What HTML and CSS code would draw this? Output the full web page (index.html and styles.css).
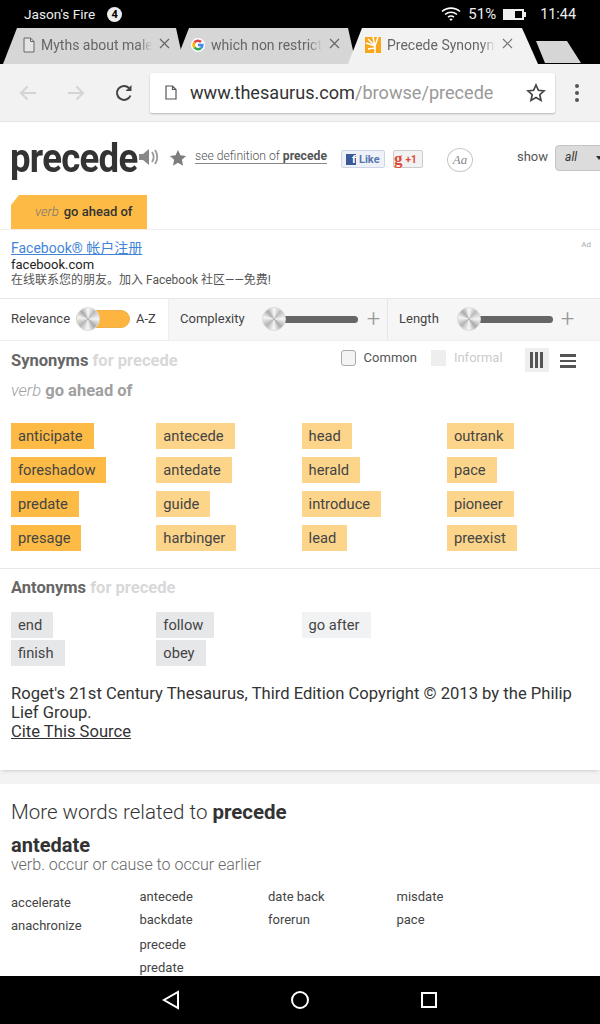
FILE: index.html
```html
<!DOCTYPE html>
<html lang="en">
<head>
  <meta charset="UTF-8" />
  <title>Precede Synonyms</title>
  <link rel="stylesheet" href="styles.css">
</head>
<body>
<div class="device">

  <div class="status-bar">
    <span class="owner">Jason's Fire</span>
    <span class="notif">4</span>
    <svg class="wifi" width="20" height="16" viewBox="0 0 20 16" fill="none" stroke="#fff" stroke-width="1.6"><path d="M1 5.500C6 1 14 1 19 5.500"/><path d="M4 8.500c3.500-3 8.500-3 12 0"/><path d="M7 11.200c1.800-1.400 4.200-1.400 6 0"/><path d="M10 15l-1.800-2c1-.7 2.600-.7 3.600 0z" fill="#fff" stroke="none"/></svg>
    <span class="batt-pct">51%</span>
    <span class="battery"><span class="battery-fill"></span></span>
    <span class="clock">11:44</span>
  </div>

  <div class="tab-strip">
    <div class="tab tab-first">
      <svg class="fav" width="12" height="16" viewBox="0 0 12 16" fill="#e4e4e4" stroke="#666" stroke-width="1"><path d="M1 1h6.500L11 4.500V15H1z"/><path d="M7.500 1v3.500H11" fill="none"/></svg>
      <span class="tab-title">Myths about male</span>
      <svg class="tab-x" width="11" height="11" viewBox="0 0 11 11" stroke="#666" stroke-width="1.200"><path d="M1 1l9 9M10 1l-9 9"/></svg>
    </div>
    <div class="tab tab-mid">
      <svg class="fav" width="14" height="14" viewBox="0 0 14 14" fill="none" stroke-width="2.600"><circle cx="7" cy="7" r="7" fill="#fff" stroke="none"/><path d="M3.500 4.500A4.300 4.300 0 0 1 10 4" stroke="#e8453c"/><path d="M3.500 4.500a4.300 4.300 0 0 0 0 5" stroke="#f4b400"/><path d="M3.500 9.500A4.300 4.300 0 0 0 10 10" stroke="#34a853"/><path d="M7 7h4.300A4.300 4.300 0 0 1 10 10" stroke="#4285f4"/></svg>
      <span class="tab-title">which non restrict</span>
      <svg class="tab-x" width="11" height="11" viewBox="0 0 11 11" stroke="#666" stroke-width="1.200"><path d="M1 1l9 9M10 1l-9 9"/></svg>
    </div>
    <div class="tab tab-active">
      <svg class="fav" width="16" height="16" viewBox="0 0 16 16"><rect width="16" height="16" fill="#f9a61a"/><path d="M10 16V9M10 9L1 6M10 9L3 2M10 9L8 0M10 9l3-9M10 11l-7 1" stroke="#fff" stroke-width="1.500"/></svg>
      <span class="tab-title">Precede Synonym</span>
      <svg class="tab-x" width="11" height="11" viewBox="0 0 11 11" stroke="#777" stroke-width="1.200"><path d="M1 1l9 9M10 1l-9 9"/></svg>
    </div>
    <div class="new-tab"></div>
  </div>

  <div class="toolbar">
    <svg class="tool-arrow" width="20" height="20" viewBox="0 0 20 20" fill="none" stroke="#d4d4d4" stroke-width="2"><path d="M18 10H3M9.500 3.500L3 10l6.500 6.500"/></svg>
    <svg class="tool-arrow" width="20" height="20" viewBox="0 0 20 20" fill="none" stroke="#d4d4d4" stroke-width="2"><path d="M2 10h15M10.500 3.500L17 10l-6.500 6.500"/></svg>
    <svg class="tool-reload" width="20" height="20" viewBox="0 0 20 20" fill="none" stroke="#444" stroke-width="2"><path d="M16.500 12.500A7 7 0 1 1 15 5"/><path d="M17.500 2v6h-6z" fill="#444" stroke="none"/></svg>
    <div class="omnibox">
      <svg class="omni-page" width="12" height="15" viewBox="0 0 12 15" fill="none" stroke="#555" stroke-width="1.200"><path d="M1 1h6.500L11 4.500V14H1z"/><path d="M7.500 1v3.500H11"/></svg>
      <span class="omni-url"><span class="omni-host">www.thesaurus.com</span>/browse/precede</span>
      <svg class="omni-star" width="20" height="20" viewBox="0 0 20 20" fill="none" stroke="#444" stroke-width="1.700"><path d="M10 2l2.400 5.300 5.600.6-4.200 3.800 1.200 5.700-5-2.900-5 2.900 1.200-5.700L2 7.900l5.600-.6z"/></svg>
    </div>
    <div class="kebab"><i></i><i></i><i></i></div>
  </div>

  <div class="page">
    <div class="panel">
      <div class="word-head">
        <h1 class="word">precede</h1>
        <svg class="speaker" width="21" height="20" viewBox="0 0 21 20" fill="#888"><path d="M0 7h4l6-5v16l-6-5H0z"/><path d="M13 5c2 3 2 7 0 10M16 3c3 4 3 10 0 14" fill="none" stroke="#999" stroke-width="1.800"/></svg>
        <svg class="head-star" width="18" height="18" viewBox="0 0 20 20" fill="#7d7d7d"><path d="M10 1l2.700 6 6.300.7-4.700 4.300 1.300 6.500-5.600-3.300-5.600 3.300L5.700 12 1 7.700 7.300 7z"/></svg>
        <a class="see-def">see definition of <b>precede</b></a>
        <span class="fb-like"><span class="fb-f">f</span>Like</span>
        <span class="g-plus"><span class="g-g">g</span>+1</span>
        <span class="aa">Aa</span>
        <span class="show-label">show</span>
        <span class="show-select">all<span class="show-arrow"></span></span>
      </div>

      <div class="def-tabs">
        <div class="def-tab"><em>verb</em><b>go ahead of</b></div>
      </div>

      <div class="ad">
        <span class="ad-mark">Ad</span>
        <a class="ad-title">Facebook® 帐户注册</a>
        <div class="ad-domain">facebook.com</div>
        <div class="ad-text">在线联系您的朋友。加入 Facebook 社区——免费!</div>
      </div>

      <div class="filters">
        <div class="filter filter-rel">
          <span>Relevance</span>
          <span class="toggle"><span class="knob"></span></span>
          <span>A-Z</span>
        </div>
        <div class="filter filter-cx">
          <span class="filter-name">Complexity</span>
          <span class="slider"><span class="knob"></span></span>
          <span class="plus">+</span>
        </div>
        <div class="filter filter-len">
          <span class="filter-name">Length</span>
          <span class="slider"><span class="knob"></span></span>
          <span class="plus">+</span>
        </div>
      </div>

      <div class="syn-head">
        <h2 class="sec-title">Synonyms <span>for precede</span></h2>
        <label class="check"><span class="box"></span>Common</label>
        <label class="check check-off"><span class="box"></span>Informal</label>
        <span class="view view-on"><i></i><i></i><i></i></span>
        <span class="view-list"><i></i><i></i><i></i></span>
      </div>
      <div class="sense"><em>verb</em> go ahead of</div>

      <ul class="tag-grid">
        <li><span class="tag hot">anticipate</span></li>
        <li><span class="tag warm">antecede</span></li>
        <li><span class="tag warm">head</span></li>
        <li><span class="tag warm">outrank</span></li>
        <li><span class="tag hot">foreshadow</span></li>
        <li><span class="tag warm">antedate</span></li>
        <li><span class="tag warm">herald</span></li>
        <li><span class="tag warm">pace</span></li>
        <li><span class="tag hot">predate</span></li>
        <li><span class="tag warm">guide</span></li>
        <li><span class="tag warm">introduce</span></li>
        <li><span class="tag warm">pioneer</span></li>
        <li><span class="tag hot">presage</span></li>
        <li><span class="tag warm">harbinger</span></li>
        <li><span class="tag warm">lead</span></li>
        <li><span class="tag warm">preexist</span></li>
      </ul>

      <div class="ant-block">
        <h2 class="sec-title">Antonyms <span>for precede</span></h2>
        <ul class="tag-grid tag-grid-ant">
          <li><span class="tag cold">end</span></li>
          <li><span class="tag cold">follow</span></li>
          <li><span class="tag pale">go after</span></li>
          <li></li>
          <li><span class="tag cold">finish</span></li>
          <li><span class="tag cold">obey</span></li>
        </ul>
      </div>

      <p class="copyright">Roget's 21st Century Thesaurus, Third Edition Copyright © 2013 by the Philip Lief Group.<br><a>Cite This Source</a></p>
    </div>

    <div class="related">
      <h3 class="rel-title">More words related to <b>precede</b></h3>
      <div class="rel-word">antedate</div>
      <div class="rel-def">verb. occur or cause to occur earlier</div>
      <div class="rel-cols">
        <ul class="rel-col rel-col-low"><li>accelerate</li><li>anachronize</li></ul>
        <ul class="rel-col"><li>antecede</li><li>backdate</li><li class="rel-gap">precede</li><li>predate</li></ul>
        <ul class="rel-col"><li>date back</li><li>forerun</li></ul>
        <ul class="rel-col"><li>misdate</li><li>pace</li></ul>
      </div>
    </div>
  </div>

  <div class="nav-bar">
    <svg width="18" height="20" viewBox="0 0 18 20" fill="none" stroke="#fff" stroke-width="2"><path d="M16 2v16L2 10z"/></svg>
    <svg width="20" height="20" viewBox="0 0 20 20" fill="none" stroke="#fff" stroke-width="2"><circle cx="10" cy="10" r="8"/></svg>
    <svg width="18" height="18" viewBox="0 0 18 18" fill="none" stroke="#fff" stroke-width="2"><rect x="2" y="2" width="14" height="14"/></svg>
  </div>

</div>
</body>
</html>
```

FILE: styles.css
```css
* {
  box-sizing: border-box;
  margin: 0;
  padding: 0;
}

body {
  font-family: Roboto, "Noto Sans CJK SC", sans-serif;
  color: #333;
  background: #fff;
}

ul {
  list-style: none;
}

.device {
  width: 600px;
  height: 1024px;
  display: flex;
  flex-direction: column;
  overflow: hidden;
}

/* Status bar */
.status-bar {
  height: 28px;
  flex-shrink: 0;
  background: #000;
  color: #eee;
  display: flex;
  align-items: center;
  padding: 0 24px;
  font-size: 13.600px;
}

.notif {
  width: 15px;
  height: 15px;
  border-radius: 50%;
  background: #eee;
  color: #000;
  font-size: 11px;
  font-weight: 700;
  text-align: center;
  line-height: 15px;
  margin-left: 12px;
}

.wifi {
  margin-left: auto;
  margin-right: 7px;
}

.batt-pct {
  font-size: 15px;
  margin-right: 7px;
}

.battery {
  width: 21px;
  height: 11px;
  border: 2px solid #eee;
  margin-right: 16px;
  display: block;
  position: relative;
}

.battery::after {
  content: "";
  position: absolute;
  right: -4px;
  top: 1px;
  width: 2px;
  height: 5px;
  background: #eee;
}

.battery-fill {
  display: block;
  width: 10px;
  height: 7px;
  background: #eee;
}

.clock {
  font-size: 14.400px;
}

/* Tabs */
.tab-strip {
  height: 36px;
  flex-shrink: 0;
  background: #000;
  display: flex;
  align-items: flex-end;
  padding-left: 3px;
}

.tab {
  height: 36px;
  display: flex;
  align-items: center;
  font-size: 14px;
  color: #666;
  background: #d6d6d6;
  white-space: nowrap;
  clip-path: polygon(0 100%, 14px 0, calc(100% - 8px) 0, 100% 100%);
}

.tab-first {
  width: 181px;
  padding: 0 0 3px 20px;
}

.tab-mid {
  width: 181px;
  margin-left: -9px;
  padding: 0 0 3px 16px;
}

.tab-active {
  width: 190px;
  margin-left: -8px;
  padding: 0 0 3px 17px;
  background: #f2f2f2;
  clip-path: polygon(0 100%, 14px 0, calc(100% - 16px) 0, 100% 100%);
}

.fav {
  flex-shrink: 0;
  margin-right: 6px;
}

.tab-title {
  width: 111px;
  overflow: hidden;
  -webkit-mask-image: linear-gradient(to right, #000 88%, transparent);
  mask-image: linear-gradient(to right, #000 88%, transparent);
}

.tab-active .tab-title {
  width: 108px;
}

.tab-x {
  flex-shrink: 0;
  margin-left: 7px;
  margin-top: -3px;
}

.new-tab {
  width: 45px;
  height: 22px;
  margin: 0 0 1px -2px;
  background: #d6d6d6;
  clip-path: polygon(0 0, 31px 0, 100% 100%, 9px 100%);
}

/* Toolbar */
.toolbar {
  height: 58px;
  flex-shrink: 0;
  background: #f2f2f2;
  display: flex;
  align-items: center;
  padding-left: 18px;
  border-bottom: 1px solid #e4e4e4;
}

.tool-arrow {
  margin-right: 28px;
}

.tool-reload {
  margin-right: 16px;
}

.omnibox {
  width: 405px;
  height: 40px;
  background: #fff;
  border-radius: 2px;
  box-shadow: 0 1px 2px rgba(0,0,0,0.25);
  display: flex;
  align-items: center;
  padding: 0 9px 0 15px;
}

.omni-url {
  margin-left: 13px;
  font-size: 18.100px;
  color: #999;
  flex: 1;
  white-space: nowrap;
}

.omni-host {
  color: #333;
}

.kebab {
  margin-left: 20px;
  display: flex;
  flex-direction: column;
  gap: 3px;
}

.kebab i {
  width: 4px;
  height: 4px;
  border-radius: 50%;
  background: #555;
}

/* Page */
.page {
  flex: 1;
  min-height: 0;
  overflow: hidden;
  background: #f3f3f3;
}

.panel {
  background: #fff;
  height: 648px;
  box-shadow: 0 2px 4px -2px rgba(0,0,0,0.25);
}

.word-head {
  height: 73px;
  display: flex;
  align-items: flex-start;
  padding-left: 10px;
  overflow: hidden;
}

.word {
  font-size: 40px;
  font-weight: 700;
  line-height: 47px;
  margin-top: 13px;
  letter-spacing: -0.8px;
  color: #333;
  width: 129px;
  flex-shrink: 0;
  transform: scaleX(0.915);
  transform-origin: left;
}

.speaker {
  margin: 25px 0 0 0;
  flex-shrink: 0;
}

.head-star {
  margin: 27px 0 0 9px;
  flex-shrink: 0;
}

.see-def {
  font-size: 12.200px;
  font-weight: 300;
  color: #555;
  margin: 28px 0 0 8px;
  border-bottom: 1px solid #888;
  line-height: 13px;
  white-space: nowrap;
}

.see-def b {
  font-weight: 700;
}

.fb-like {
  margin: 28px 0 0 14px;
  width: 44px;
  height: 18px;
  border: 1px solid #cdd5e6;
  border-radius: 2px;
  background: #eef1f8;
  color: #5a76b0;
  font-size: 11px;
  font-weight: 700;
  display: flex;
  align-items: center;
  padding-left: 4px;
  flex-shrink: 0;
}

.fb-f {
  width: 10px;
  height: 11px;
  background: #3b5998;
  color: #fff;
  font-size: 11px;
  line-height: 12px;
  text-align: right;
  margin-right: 3px;
}

.g-plus {
  margin: 28px 0 0 8px;
  width: 30px;
  height: 18px;
  border: 1px solid #ccc;
  border-radius: 2px;
  background: #f2f2f2;
  color: #dd4b39;
  font-size: 10px;
  font-weight: 700;
  display: flex;
  align-items: center;
  flex-shrink: 0;
}

.g-g {
  font-family: "Liberation Serif", serif;
  font-size: 17px;
  line-height: 14px;
  margin-right: 3px;
}

.aa {
  margin: 26px 0 0 24px;
  width: 26px;
  height: 24px;
  border: 1.500px solid #c8c8c8;
  border-radius: 50%;
  font-family: "Liberation Serif", serif;
  font-style: italic;
  font-size: 13px;
  color: #888;
  text-align: center;
  line-height: 21px;
  flex-shrink: 0;
}

.show-label {
  font-size: 13px;
  margin: 27px 0 0 44px;
  color: #555;
  flex-shrink: 0;
}

.show-select {
  margin: 23px 0 0 7px;
  width: 60px;
  height: 26px;
  flex-shrink: 0;
  background: #dcdcdc;
  border: 1px solid #c4c4c4;
  border-radius: 4px;
  font-size: 12px;
  font-style: italic;
  padding-left: 9px;
  line-height: 23px;
  position: relative;
}

.show-arrow {
  position: absolute;
  left: 40px;
  top: 10px;
  border: 3px solid transparent;
  border-top: 4px solid #333;
}

.def-tabs {
  padding-left: 11px;
  height: 34px;
}

.def-tab {
  width: 136px;
  height: 34px;
  background: #fdbb45;
  clip-path: polygon(8px 0, 100% 0, 100% 100%, 0 100%, 0 10px);
  display: flex;
  align-items: center;
  padding: 0 0 2px 24px;
  font-size: 13px;
  white-space: nowrap;
}

.def-tab em {
  color: #777;
  font-weight: 300;
  margin-right: 5px;
}

.def-tab b {
  color: #333;
  font-weight: 500;
}

.ad {
  height: 69px;
  padding: 10px 11px 0;
  border-top: 1px solid #eee;
  position: relative;
}

.ad-mark {
  position: absolute;
  right: 9px;
  top: 10px;
  font-size: 8px;
  color: #aaa;
}

.ad-title {
  display: block;
  font-size: 14px;
  line-height: 17px;
  color: #4285d8;
  text-decoration: underline;
}

.ad-domain {
  font-size: 13px;
  line-height: 16px;
  color: #222;
}

.ad-text {
  font-size: 12px;
  line-height: 15px;
  color: #555;
}

.filters {
  height: 43px;
  display: flex;
  border-top: 1px solid #e8e8e8;
  border-bottom: 1px solid #eee;
  font-size: 13px;
  color: #444;
}

.filter {
  display: flex;
  align-items: center;
}

.filter-rel {
  width: 168px;
  padding-left: 11px;
  padding-bottom: 2px;
}

.filter-cx {
  width: 219px;
  background: #f6f6f6;
  border-left: 1px solid #eee;
  padding-left: 11px;
  padding-bottom: 2px;
}

.filter-len {
  flex: 1;
  background: #f6f6f6;
  border-left: 1px solid #e6e6e6;
  padding-left: 11px;
  padding-bottom: 2px;
}

.toggle {
  width: 54px;
  height: 18px;
  margin: 0 6px 0 6px;
  border-radius: 9px;
  background: #fdb53f;
  border: 1px solid #eeb04a;
  position: relative;
  display: block;
}

.slider {
  height: 7px;
  border-radius: 4px;
  background: #666;
  position: relative;
  display: block;
  margin-top: 2px;
  margin-right: 8px;
}

.filter-cx .slider {
  margin-left: 19px;
  margin-right: 9px;
  width: 94px;
}

.filter-len .slider {
  margin-left: 20px;
  width: 94px;
}

.knob {
  position: absolute;
  left: -1px;
  top: -4px;
  width: 24px;
  height: 24px;
  border-radius: 50%;
  border: 1px solid #ddd;
  background: conic-gradient(#fafafa 0deg, #bbb 40deg, #f5f5f5 90deg, #aaa 140deg, #f8f8f8 180deg, #b5b5b5 230deg, #f5f5f5 280deg, #aaa 320deg, #fafafa 360deg);
}

.slider .knob {
  top: -9px;
  left: -2px;
}

.plus {
  font-size: 24px;
  font-weight: 300;
  color: #999;
  line-height: 24px;
}

.syn-head {
  height: 38px;
  display: flex;
  align-items: flex-start;
  padding-left: 11px;
}

.sec-title {
  font-size: 16.500px;
  font-weight: 700;
  color: #666;
  line-height: 19px;
  margin-top: 10px;
  white-space: nowrap;
}

.sec-title span {
  color: #d8d8d8;
}

.check {
  font-size: 13px;
  color: #555;
  display: flex;
  align-items: center;
  line-height: 16px;
  margin-top: 9px;
}

.syn-head .check:first-of-type {
  margin-left: 163px;
}

.box {
  width: 15px;
  height: 16px;
  border: 1px solid #aaa;
  border-radius: 3px;
  background: #f4f4f4;
  margin-right: 8px;
}

.check-off {
  color: #ccc;
  margin-left: 14px;
}

.check-off .box {
  border: none;
  border-radius: 0;
  background: #eee;
}

.view {
  width: 24px;
  height: 24px;
  background: #eee;
  margin: 7px 0 0 22px;
  display: flex;
  justify-content: center;
  align-items: center;
  gap: 2px;
}

.view i {
  width: 3px;
  height: 16px;
  background: #555;
}

.view-list {
  width: 16px;
  margin: 13px 0 0 11px;
  display: flex;
  flex-direction: column;
  gap: 3px;
}

.view-list i {
  height: 2.500px;
  background: #555;
}

.sense {
  font-size: 16.500px;
  font-weight: 700;
  color: #a0a0a0;
  padding-left: 11px;
  line-height: 19px;
  margin-top: 2px;
}

.sense em {
  font-weight: 300;
}

.tag-grid {
  display: grid;
  grid-template-columns: repeat(4, 145.300px);
  grid-auto-rows: 34px;
  padding: 23px 0 0 11px;
}

.tag {
  display: inline-block;
  height: 26px;
  line-height: 26px;
  padding: 0 11px 0 7px;
  font-size: 14.700px;
  color: #444;
  white-space: nowrap;
}

.hot {
  background: #fdbb45;
}

.warm {
  background: #fcd58b;
}

.cold {
  background: #e6e7e9;
}

.pale {
  background: #f1f2f3;
}

.ant-block {
  margin-top: 9px;
  border-top: 1px solid #e8e8e8;
}

.ant-block .sec-title {
  padding-left: 11px;
  margin-top: 9px;
}

.tag-grid-ant {
  grid-auto-rows: 28px;
  padding-top: 15px;
}

.copyright {
  font-size: 16.600px;
  line-height: 19px;
  color: #333;
  padding: 16px 20px 0 11px;
}

.copyright a {
  text-decoration: underline;
}

.related {
  margin-top: 14px;
  height: 200px;
  background: #fff;
  padding: 16px 11px 0;
}

.rel-title {
  font-size: 20.500px;
  font-weight: 300;
  line-height: 24px;
  color: #333;
}

.rel-title b {
  font-weight: 700;
}

.rel-word {
  font-size: 20px;
  font-weight: 700;
  line-height: 24px;
  margin-top: 9px;
}

.rel-def {
  font-size: 16px;
  font-weight: 300;
  line-height: 16px;
  color: #666;
}

.rel-cols {
  display: grid;
  grid-template-columns: repeat(4, 128.500px);
  margin-top: 12px;
}

.rel-col li {
  font-size: 13px;
  line-height: 23px;
  color: #444;
}

.rel-col-low {
  padding-top: 6px;
}

.rel-col .rel-gap {
  margin-top: 2px;
}

/* Nav bar */
.nav-bar {
  height: 48px;
  flex-shrink: 0;
  background: #000;
  display: flex;
  align-items: center;
  justify-content: center;
  gap: 110px;
}
```
